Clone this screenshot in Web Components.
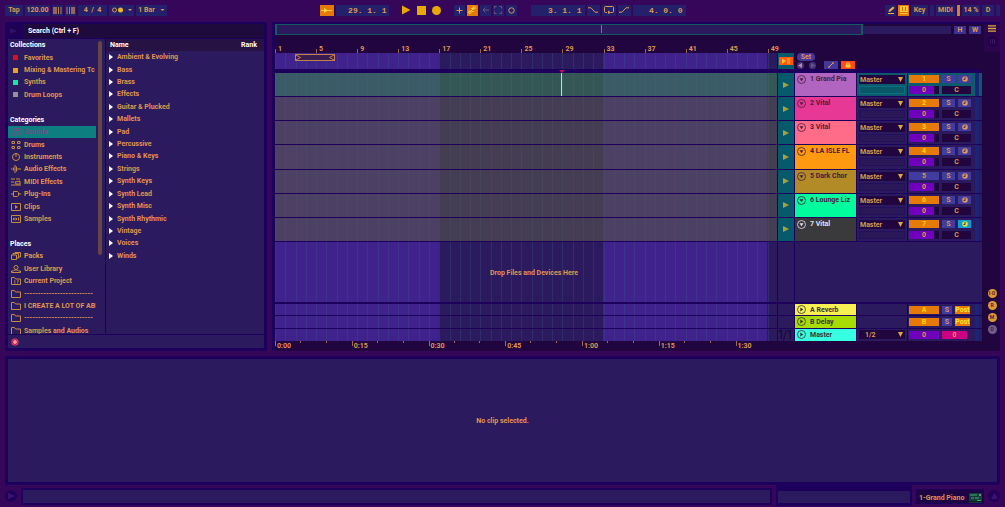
<!DOCTYPE html>
<html lang="en">
<head>
<meta charset="utf-8">
<title>Arrangement</title>
<style>
  :root {
    --page: #35065a; --navy: #1d005c; --panel: #2c1a5e; --deep: #20053f;
    --field: #25206b; --text: #df9650; --gold: #e9a800; --orange: #e67a08;
    --teal: #075a6c; --btn: #413c9f; --violet: #6f00bd;
  }
  html, body { height: 100%; }
  body { margin: 0; background: var(--page); color: var(--text); font: 700 7px/10px Roboto, Inter, sans-serif; }
</style>
</head>
<body>
<daw-app></daw-app>
<script>
const BASE = `<style>
*{box-sizing:border-box}
button,input,select{font:inherit;color:inherit;border:0;margin:0;padding:0;background:none;min-width:0;border-radius:0;outline:0}
button{display:flex;align-items:center;justify-content:center;white-space:nowrap}
select{appearance:none;-webkit-appearance:none}
svg{display:block;fill:none;stroke:currentColor;flex:none}
</style>`;
function define(name, render) {
  customElements.define(name, class extends HTMLElement {
    constructor() { super(); this.attachShadow({ mode: 'open' }); }
    connectedCallback() {
      if (this.shadowRoot.childNodes.length) return;
      this.shadowRoot.innerHTML = BASE + render(this);
    }
  });
}
const svg = (w, h, vw, vh, body) => `<svg width="${w}" height="${h}" viewBox="0 0 ${vw} ${vh}" aria-hidden="true">${body}</svg>`;

/* A box in the control bar; width comes from --w */
define('tool-button', el => `<style>
:host{display:block;flex:none;width:var(--w,11px);height:11px}
button{width:100%;height:100%;background:var(--bg,var(--field));gap:3px}
</style><button type="button" aria-label="${el.getAttribute('label') || el.textContent.trim()}"><slot></slot></button>`);

define('tool-field', el => `<style>
:host{display:block;flex:none;width:var(--w);height:11px}
input{display:block;width:100%;height:11px;background:var(--field);text-align:var(--align,center);padding:0 var(--pr,0px) 0 0}
:host([mono]) input{font-family:"Liberation Mono",monospace;font-weight:700;font-size:8px;white-space:pre}
</style><input aria-label="${el.getAttribute('label')}" value="${el.getAttribute('value')}">`);

define('transport-bar', () => `<style>
:host{display:grid;grid-template-columns:1fr auto 1fr;align-items:center;padding:0 5px;height:20px}
div{display:flex;align-items:center;gap:2px}
.right{justify-content:flex-end}
.sp{margin-left:9px}.sp3{margin-left:12px}
.bare{--bg:transparent;color:var(--gold);--w:13px}
.on{--bg:var(--orange);color:#ffd23c}
.dim{color:#6d5578}
.meter{width:3px;height:11px;background:#c08a2a}
</style>
<div>
 <tool-button style="--w:18px">Tap</tool-button>
 <tool-field label="Tempo" value="120.00" style="--w:25px"></tool-field>
 <tool-button label="Nudge down">${svg(9,7,9,7,'<path d="M1 0v7M3 0v7" stroke-width="1.2"/><path d="M5.5 0v7M8 0v7" stroke-width=".8"/>')}</tool-button>
 <tool-button label="Nudge up">${svg(9,7,9,7,'<path d="M1 0v7M3.5 0v7" stroke-width=".8"/><path d="M6 0v7M8 0v7" stroke-width="1.2"/>')}</tool-button>
 <tool-field label="Time signature" value="4  /  4" style="--w:29px"></tool-field>
 <tool-button label="Metronome" style="--w:25px">${svg(20,6,20,6,'<circle cx="2.5" cy="3" r="2"/><circle cx="8.500" cy="3" r="2.500" fill="#e9b820" stroke="none"/><path d="M16 2h4l-2 2z" fill="currentColor" stroke="none"/>')}</tool-button>
 <tool-button label="Quantization" style="--w:31px">1 Bar&nbsp;${svg(5,3,5,3,'<path d="M.5 0h4l-2 2z" fill="currentColor" stroke="none"/>')}</tool-button>
</div>
<div>
 <tool-button class="on" label="Follow" style="--w:14px">${svg(11,5,11,5,'<path d="M0 2.500h4M6 2.500h5"/><path d="M3 0l4 2.500-4 2.500z" fill="currentColor" stroke="none"/>')}</tool-button>
 <tool-field mono label="Position" value="29. 1. 1" style="--w:53px;--align:right;--pr:2px"></tool-field>
 <tool-button class="bare sp" label="Play">${svg(10,10,10,10,'<path d="M1 .5l8.500 4.500L1 9.500z" fill="currentColor" stroke="none"/>')}</tool-button>
 <tool-button class="bare" label="Stop">${svg(9,9,9,9,'<path d="M0 0h9v9H0z" fill="currentColor" stroke="none"/>')}</tool-button>
 <tool-button class="bare" label="Record">${svg(9,9,9,9,'<circle cx="4.500" cy="4.500" r="4.500" fill="currentColor" stroke="none"/>')}</tool-button>
 <tool-button class="sp" label="Overdub">${svg(7,7,7,7,'<path d="M3.500 .5v6M.5 3.500h6"/>')}</tool-button>
 <tool-button class="on" label="Automation arm">${svg(8,8,8,8,'<path d="M2 6l4-4"/><circle cx="1.800" cy="6.200" r="1.200"/><circle cx="6.200" cy="1.800" r="1.200"/><path d="M3 2.500h2M3.500 5.500h2"/>')}</tool-button>
 <tool-button class="dim" label="Re-enable automation">${svg(7,6,7,6,'<path d="M1 3h6M3.500 .5L1 3l2.500 2.500"/>')}</tool-button>
 <tool-button class="dim" label="Capture">${svg(8,8,8,8,'<path d="M.5 2.500v-2h2M5.500 .5h2v2M7.500 5.500v2h-2M2.500 7.500h-2v-2"/>')}</tool-button>
 <tool-button label="Session record">${svg(7,7,7,7,'<circle cx="3.500" cy="3.500" r="2.700"/>')}</tool-button>
 <tool-field class="sp3" mono label="Loop start" value="3. 1. 1" style="--w:54px;--align:right;--pr:3px"></tool-field>
 <tool-button label="Punch in" style="--w:13px">${svg(10,6,10,6,'<path d="M0 .8h3l4 4.400h3"/>')}</tool-button>
 <tool-button label="Loop" style="--w:14px">${svg(10,8,10,8,'<path d="M3 6.500H1.500q-1 0-1-1v-4q0-1 1-1h7q1 0 1 1v4q0 1-1 1H7"/><path d="M4 4.500l3 2-3 1.500z" fill="currentColor" stroke="none"/>')}</tool-button>
 <tool-button label="Punch out" style="--w:13px">${svg(10,6,10,6,'<path d="M0 5.200h3l4-4.400h3"/>')}</tool-button>
 <tool-field mono label="Loop length" value="4. 0. 0" style="--w:53px;--align:right;--pr:3px"></tool-field>
</div>
<div class="right">
 <tool-button label="Draw mode">${svg(8,8,8,8,'<path d="M1 7.500h6" stroke="#f0b040"/><path d="M1.500 6l.5-2L6 .5l1.500 1.500-4 3.500z" fill="#f0b040" stroke="none"/>')}</tool-button>
 <tool-button class="on" label="Computer keyboard">${svg(8,8,8,8,'<path d="M0 0h8v8H0z" fill="#ffc832" stroke="none"/><path d="M2.500 1v4M5.500 1v4M0 6.500h8" stroke="#d96b00"/>')}</tool-button>
 <tool-button style="--w:17px">Key</tool-button>
 <tool-button label="Key in" style="--w:4px"></tool-button>
 <tool-button style="--w:19px">MIDI</tool-button>
 <span class="meter"></span>
 <tool-button style="--w:18px">14 %</tool-button>
 <tool-button style="--w:12px">D</tool-button>
 <tool-button label="MIDI in" style="--w:4px"></tool-button>
</div>`);

/* Browser */
const F = '<path d="M.5 7.500v-7h3l1 1.500h5v5.500z"/>';
const ICONS = {
  note: '<path d="M3 6.500v-6h6v5.500M3 2.500h6"/><circle cx="2" cy="6.500" r="1.200"/><circle cx="8" cy="6" r="1.200"/>',
  drums: '<path d="M1 .5h2.500v2H1zM6.500 .5H9v2H6.500zM1 5.500h2.500v2H1zM6.500 5.500H9v2H6.500z"/>',
  dial: '<circle cx="5" cy="4" r="3.500"/><path d="M5 0v4"/>',
  wave: '<path d="M0 4h1.500M2.500 2.500v3M4 0v8M5.500 1.500v5M7 3v2M8 4h2"/>',
  midi: '<path d="M0 1h4M0 4h3M0 7h10M5 1h4M4 4l5-1v3H5z"/>',
  plug: '<path d="M0 4h2.500M2.500 1.500h4l1 1v3l-1 1h-4zM7.500 4H10"/>',
  clip: '<path d="M.5 .5h9v7h-9z"/><path d="M4 2l3 2-3 2z" fill="currentColor" stroke="none"/>',
  sample: '<path d="M.5 .5h9v7h-9z"/><path d="M2.500 3v2M4 2.500v3M5.500 3v2M7.500 2.500v3"/>',
  packs: '<path d="M.5 3h5v4.500h-5zM2 3V1.500h5.500V6H5.500M4 1.500V.5h5.500V5H7.500"/>',
  user: '<circle cx="5" cy="2.500" r="2"/><path d="M.5 7.500V6h2l1-1h3l1 1h2v1.500z"/>',
  project: F + '<path d="M3 4h1.500M6 4h2M3 6h1.500M6 6h1"/>',
  folder: F
};
define('browser-item', el => {
  const i = el.getAttribute('icon') || '', sel = el.hasAttribute('selected');
  const g = i[0] === '#' ? `<i style="background:${i}"></i>` : svg(10, 8, 10, 8, ICONS[i]);
  return `<style>
:host{display:flex;min-width:0;min-height:0}
button{display:flex;width:100%;justify-content:flex-start;padding-left:3px;overflow:hidden;${sel ? 'background:#0d7f80;color:#8c3f80' : ''}}
span.g{flex:none;width:13px;color:${sel ? '#7a4a80' : '#c48c42'}}
i{display:block;width:5px;height:5px;margin-left:2px}
</style><button type="button"><span class="g">${g}</span><slot></slot></button>`;
});
define('folder-row', () => `<style>
:host{display:flex}
button{gap:4px}
</style><button type="button">${svg(4,6,4,6,'<path d="M0 0l4 3-4 3z" fill="#fff" stroke="none"/>')}<slot></slot></button>`);

const it = (icon, t, x = '') => `<browser-item icon="${icon}" ${x}>${t}</browser-item>`;
define('browser-panel', () => `<style>
:host{display:grid;grid-template-rows:14px 1fr 13px;gap:1px;background:var(--navy);padding:2px 3px 3px;min-width:0;border-radius:2px}
.search{display:flex;gap:4px}
.search input{flex:1;background:#1f0a3e;color:#fff;padding-left:5px}
.search input::placeholder{color:#fff;opacity:1}
.search .c{width:11px;height:11px;margin-top:1px;border-radius:50%;background:#21004f;color:#32106a}
.body{display:grid;grid-template-columns:97px 1fr;gap:1px;min-height:0;overflow:hidden}
.side{background:var(--panel);height:295px;overflow:hidden;display:grid;grid-template-columns:88px 4px;column-gap:2px}
.list{height:298px;display:grid;grid-auto-rows:1fr}
h2{margin:0;font:inherit;line-height:12px;color:#fff;padding-left:2px;align-self:center}
.bar{width:4px;height:214px;margin-top:2px;background:#674445;border-radius:2px}
.names{background:var(--panel)}
.hd{display:flex;justify-content:space-between;background:#261344;height:12px;padding:0 7px 0 2px}
.rows{height:211px;display:grid;grid-auto-rows:1fr;padding-left:3px}
.foot{background:var(--panel);display:flex;align-items:center;padding-left:3px}
</style>
<div class="search"><button class="c" type="button" aria-label="Hide browser">${svg(7,6,7,6,'<path d="M0 0l7 3-7 3z" fill="currentColor" stroke="none"/>')}</button><input type="search" aria-label="Search" placeholder="Search (Ctrl + F)"></div>
<div class="body">
<nav class="side"><div class="list"><h2>Collections</h2>
${it('#d8101c','Favorites')}${it('#f0a020','Mixing &amp; Mastering Tc')}${it('#10e8a8','Synths')}${it('#9490a0','Drum Loops')}<span></span>
<h2>Categories</h2>${it('note','Sounds','selected')}${it('drums','Drums')}${it('dial','Instruments')}${it('wave','Audio Effects')}${it('midi','MIDI Effects')}${it('plug','Plug-Ins')}${it('clip','Clips')}${it('sample','Samples')}<span></span>
<h2>Places</h2>${it('packs','Packs')}${it('user','User Library')}${it('project','Current Project')}${it('folder','-------------------------')}${it('folder','I CREATE A LOT OF ABI')}${it('folder','-------------------------')}${it('folder','Samples and Audios')}
</div><span class="bar"></span></nav>
<section class="names"><div class="hd"><h2>Name</h2><h2>Rank</h2></div><div class="rows">
${['Ambient &amp; Evolving','Bass','Brass','Effects','Guitar &amp; Plucked','Mallets','Pad','Percussive','Piano &amp; Keys','Strings','Synth Keys','Synth Lead','Synth Misc','Synth Rhythmic','Vintage','Voices','Winds'].map(n => `<folder-row>${n}</folder-row>`).join('')}
</div></section></div>
<div class="foot">${svg(8,8,8,8,'<circle cx="4" cy="4" r="3.500" fill="#f2507c" stroke="none"/><circle cx="4" cy="4" r="2.500" stroke="#c8104a"/><path d="M4 2v4M2 4h4" stroke="#ffc0b0"/>')}</div>`);

/* One row of the arrangement: lane, launch cell, name, routing, mixer */
const ROWCSS = `
:host{display:grid;grid-template-columns:1fr 16px 61px 50px 74px;column-gap:1px;min-height:0;min-width:0}
.lane{background:linear-gradient(var(--tint),var(--tint)),repeating-linear-gradient(90deg,rgba(60,90,140,.28) 0 1px,transparent 1px 2.045%),linear-gradient(90deg,#3f228c 0 32.700%,#2c1a5e 0 65.300%,#3f228c 0 98%,#2c1a5e 0)}
.name{display:flex;gap:4px;padding:0 0 0 2px;overflow:hidden;white-space:nowrap}
.io,.mix{background:var(--cell,var(--panel))}
button.b{font-size:7px;line-height:8px;background:var(--fill,var(--btn));height:8px}
`;
define('track-row', el => {
  const g = n => el.getAttribute(n), sel = el.hasAttribute('selected'), n = g('n');
  return `<style>${ROWCSS}
:host{--tint:${sel ? 'rgba(56,128,80,.6)' : 'rgba(85,85,75,.6)'};--cell:${sel ? '#0c5a6c' : 'var(--panel)'};border-bottom:1px solid var(--navy)}
.lane{position:relative}
.head{position:absolute;left:57%;top:-3px;bottom:0;margin-left:-2px;width:5px}
.head:before{content:"";display:block;border:3px solid transparent;border-top-color:#c8104a;border-bottom:0}
.head:after{content:"";display:block;width:1px;height:23px;margin-left:2px;background:#d8d0d8}
.launch{background:var(--teal);color:#a8a038}
.name{background:${g('color')};color:${g('ink') || '#45203c'};padding-top:1px}
.name svg{margin-top:1px}
.io{padding:2px 2px 1px;display:grid;grid-template-rows:9px 8px;row-gap:2px}
.io label{display:flex;align-items:center;background:var(--deep);padding-right:2px}
.io select{flex:1;height:9px;padding-left:1px}
.slot{background:${sel ? '#085868' : '#281857'};border:1px solid ${sel ? '#0c7080' : '#24105a'}}
.mix{display:grid;grid-template-columns:30px 13px 13px 1fr;column-gap:3px;padding-left:1px}
.c{display:grid;grid-template-rows:8px 8px;row-gap:3px;padding-top:2px}
.two{grid-column:2/4;display:grid;grid-template-columns:13px 13px;grid-template-rows:8px 8px;gap:3px;padding-top:2px}
.two .pan{grid-column:1/3;--fill:var(--deep)}
.num{${n === '5' ? '' : '--fill:var(--orange);color:#ffd400'}}
.vol{--fill:linear-gradient(90deg,var(--violet) 25px,var(--deep) 0)}
.rec{${n === '7' ? '--fill:#109cd0;color:#e8e030' : ''}}
.mt{display:block;width:4px;margin-left:1px;background:#1c2478}
</style>
<div class="lane">${sel ? '<span class="head"></span>' : ''}</div>
<button class="launch" type="button" aria-label="Track ${n} activity">${svg(6,6,6,6,'<path d="M0 0l6 3-6 3z" fill="currentColor" stroke="none"/>')}</button>
<div class="name">${svg(9,9,9,9,'<circle cx="4.500" cy="4.500" r="4" stroke-width=".8"/><path d="M2.500 3.200h4l-2 3z" fill="currentColor" stroke="none"/>')}<span><slot></slot></span></div>
<div class="io"><label><select aria-label="Output of track ${n}"><option>Master</option></select>${svg(5,5,5,5,'<path d="M0 0h5l-2.500 5z" fill="#e0a840" stroke="none"/>')}</label><div class="slot"></div></div>
<div class="mix"><div class="c"><button class="b num" type="button">${n}</button><button class="b vol" type="button">0</button></div>
<div class="two"><button class="b" type="button">S</button><button class="b rec" type="button" aria-label="Arm">${svg(6,6,6,6,'<circle cx="3" cy="3" r="2.800" fill="currentColor" stroke="none"/><path d="M3 1v2.500H1.500" stroke="#33308a"/>')}</button><button class="b pan" type="button">C</button></div><i class="mt"></i></div>`;
});

define('return-row', el => {
  const n = el.getAttribute('n'), m = n === 'M';
  return `<style>${ROWCSS}
:host{--tint:transparent;border-bottom:1px solid var(--navy)}
:host([n="M"]){border-bottom:0}
.name{grid-column:3;align-items:center;background:${el.getAttribute('color')};color:#3a3434}
.cellx{background:var(--panel);position:relative}
.q{position:absolute;right:2px;top:0;font:400 12px/12px Inter,sans-serif;color:#150830;white-space:nowrap}
.io{padding:1px 2px}
.io label{display:flex;align-items:center;background:var(--deep);height:9px;padding-right:2px}
.io select{flex:1;padding-left:6px;height:9px}
.mix{display:grid;grid-template-columns:30px 10px 15px 1fr;column-gap:3px;padding-left:1px;align-items:center}
.num{${m ? '--fill:var(--violet)' : '--fill:var(--orange);color:#ffd400'}}
.post{--fill:var(--orange);color:#ffe030}
.pk{grid-column:2/4;width:25px;--fill:#cc0080}
.mt{display:block;width:4px;height:100%;margin-left:2px;background:#1c2478}
</style>
<div class="lane"></div><div class="cellx">${m ? '<span class="q">1/1</span>' : ''}</div>
<div class="name">${svg(9,9,9,9,'<circle cx="4.500" cy="4.500" r="4" stroke-width=".8"/><path d="M3.300 2.500l3 2-3 2z" fill="currentColor" stroke="none"/>')}<span><slot></slot></span></div>
<div class="io">${m ? `<label><select aria-label="Master output"><option>1/2</option></select>${svg(5,5,5,5,'<path d="M0 0h5l-2.500 5z" fill="#e0a840" stroke="none"/>')}</label>` : ''}</div>
<div class="mix"><button class="b num" type="button">${m ? '0' : n}</button>${m ? '<button class="b pk" type="button">0</button>' : '<button class="b" type="button">S</button><button class="b post" type="button">Post</button>'}<i class="mt"></i></div>`;
});

define('bar-ruler', () => `<style>
:host{display:flex;height:10px;margin-top:8px}
span{flex:40 0 0;min-width:0;white-space:nowrap;display:flex;gap:2px;line-height:12px}
span:last-child{flex:9 0 0}
span:before{content:"";width:1px;height:4px;margin-top:6px;background:#9a6448;flex:none}
</style>${[...Array(13)].map((_, i) => `<span>${i * 4 + 1}</span>`).join('')}`);
define('time-ruler', () => `<style>
:host{display:flex;height:10px}
span{flex:769 0 0;min-width:0;white-space:nowrap;line-height:10px;
background:linear-gradient(#a06a50,#a06a50) 0 0/1px 5px no-repeat,linear-gradient(#a06a50,#a06a50) 33% 0/1px 2px no-repeat,linear-gradient(#a06a50,#a06a50) 67% 0/1px 2px no-repeat}
span:before{content:"";display:inline-block;width:2px}
span:last-child{flex:415 0 0;background:linear-gradient(#a06a50,#a06a50) 0 0/1px 5px no-repeat}
span:nth-child(5){position:relative}
b{position:absolute;right:100%;margin-right:18px;top:-2px;border:3px solid transparent;border-bottom-color:#c8104a;border-top:0}
</style>${['0:00', '0:15', '0:30', '0:45', '1:00', '1:15', '1:30'].map(t => `<span>${t}${t === '1:00' ? '<b></b>' : ''}</span>`).join('')}`);

define('arrangement-view', () => `<style>${ROWCSS.replace(/:host\{[^}]*\}/, '')}
:host{display:grid;grid-template-columns:1fr 16px;column-gap:2px;background:var(--deep);border:solid var(--navy);border-width:2px 0 0 3px;min-width:0}
.main{display:grid;grid-template-rows:11px 18px 16px 4px 169px 62px 37px 10px;min-width:0}
.g{display:grid;grid-template-columns:1fr 16px 61px 50px 74px;column-gap:1px}
.over{display:flex;align-items:center;gap:3px;padding-right:1px}
.over .v{flex:588;height:11px;border:1px solid #135a60;border-width:1px 2px;background:var(--panel);display:flex;justify-content:center}
.v i{width:1px;height:8px;background:#b06a40;margin-left:65px}
.over .r{flex:89;height:8px;background:var(--panel);margin-left:-3px}
.over button{width:12px;height:8px;background:#3d318f}
.scrub{position:relative}
.loop{position:absolute;left:4%;width:8%;min-width:30px;top:1px;height:7px;border:1px solid #c08048;background:#3a1c50;display:flex;justify-content:space-between;color:#c08048}
.lane{--tint:transparent}
.s2{background:var(--teal);padding:4px 1px}
.s2 button{width:100%;height:8px;background:#ff5a10;color:#ffc030}
.set{display:grid;grid-column:3/6;grid-template-columns:9px 12px 14px 14px;column-gap:3px;grid-template-rows:8px 8px;padding-left:2px}
.set .p{grid-column:1/3;width:18px;background:#43389a;border-radius:4px;height:8px}
.set .rd{width:7px;height:7px;border-radius:50%;background:#46327c;grid-row:2;margin-top:1px}
.set .k{grid-row:2;background:#43389a;height:8px;width:14px}
.set .k.red{background:#ff4a1c;color:#ffd030}
.gap{background:var(--navy)}
.tracks{display:grid;grid-auto-rows:1fr;background:var(--navy)}
.drop{background:var(--navy);padding-bottom:2px}
.drop .lane{display:flex;align-items:center;justify-content:center;padding:2px 0 0 16px}
.drop .b2{grid-column:3/6;background:var(--panel)}
.drop .b1{background:var(--panel)}
.ret{display:grid;grid-auto-rows:1fr;background:var(--navy)}
.rail{display:flex;flex-direction:column;align-items:center}
.top{align-self:stretch;background:#2b054c;height:28px;display:flex;flex-direction:column;align-items:center;gap:4px}
.top button{width:11px;height:9px}
.dot{width:9px;height:9px;border-radius:50%;background:#dd9830;color:#4a2040;font-size:5px;line-height:9px;margin-bottom:3px}
.rail .gapx{flex:1}
.dot.low{margin-bottom:17px;background:#6d5c92}
</style>
<div class="main">
<div class="over"><div class="v"><i></i></div><div class="r"></div><button type="button">H</button><button type="button">W</button></div>
<div class="g"><bar-ruler></bar-ruler></div>
<div class="g"><div class="lane scrub"><div class="loop">${svg(5,5,5,5,'<path d="M0 0l4.500 2.500L0 5"/>')}${svg(5,5,5,5,'<path d="M5 0L.5 2.500 5 5"/>')}</div></div>
<div class="s2"><button type="button" aria-label="Back to arrangement">${svg(10,6,10,6,'<path d="M1 .5l4 2.500-4 2.500z" fill="currentColor" stroke="none"/><path d="M6 1h3M6 3h3M6 5h3"/>')}</button></div>
<div class="set"><button class="p" type="button">Set</button>
<button class="rd" type="button" aria-label="Previous locator">${svg(5,5,5,5,'<path d="M4 0L0 2.500 4 5z" fill="#b090a0" stroke="none"/>')}</button>
<button class="rd" type="button" aria-label="Next locator">${svg(5,5,5,5,'<path d="M1 0l4 2.500L1 5z" fill="#6a5088" stroke="none"/>')}</button>
<button class="k" type="button" aria-label="Automation mode">${svg(6,6,6,6,'<path d="M1 5l4-4"/><circle cx="1" cy="5" r=".5"/><circle cx="5" cy="1" r=".5"/>')}</button>
<button class="k red" type="button" aria-label="Lock envelopes">${svg(6,6,6,6,'<path d="M.5 2.500h5v3h-5z" fill="currentColor" stroke="none"/><path d="M1.500 3V1.500q1.500-1.500 3 0V3"/>')}</button></div></div>
<div class="gap"></div>
<div class="tracks">
<track-row n="1" selected color="#b265c0">1 Grand Pia</track-row>
<track-row n="2" color="#e83896">2 Vital</track-row>
<track-row n="3" color="#ff6c88">3 Vital</track-row>
<track-row n="4" color="#ff990f">4 LA ISLE FL</track-row>
<track-row n="5" color="#b28b26">5 Dark Chor</track-row>
<track-row n="6" color="#00fc9c">6 Lounge Liz</track-row>
<track-row n="7" color="#3a3a3c" ink="#e8e0e8">7 Vital</track-row>
</div>
<div class="g drop"><div class="lane">Drop Files and Devices Here</div><div class="b1"></div><div class="b2"></div></div>
<div class="ret"><return-row n="A" color="#f6f052">A Reverb</return-row><return-row n="B" color="#a6dc00">B Delay</return-row><return-row n="M" color="#36ffe2">Master</return-row></div>
<div class="g"><time-ruler></time-ruler></div>
</div>
<div class="rail"><div class="top"><button type="button" aria-label="Menu">${svg(8,7,8,7,'<path d="M0 .8h8M0 3.500h8M0 6.200h8" stroke="#e0a840" stroke-width="1.300"/>')}</button><button type="button" aria-label="Session view">${svg(11,11,11,11,'<circle cx="5.500" cy="5.500" r="5" fill="#24003f" stroke="#21004f"/><path d="M3.500 3v5M5.500 3v5M7.500 3v5" stroke="#3a1464"/>')}</button></div>
<span class="gapx"></span>
<button class="dot" type="button">I·O</button><button class="dot" type="button">R</button><button class="dot" type="button">M</button><button class="dot low" type="button">D</button></div>`);

define('detail-view', () => `<style>
:host{display:flex;align-items:center;justify-content:center;background:var(--panel);border:3px solid var(--navy);border-radius:2px;min-height:60px}
</style><slot></slot>`);

define('status-strip', () => `<style>
:host{display:grid;grid-template-columns:12px 1fr 136px 68px 12px;column-gap:4px;height:22px;padding:0 5px}
.c{width:12px;height:12px;margin-top:5px;border-radius:50%;background:#22005a;color:#3a1470}
.box{background:var(--panel);border:2px solid var(--navy);margin:3px 0 2px}
.tab{background:var(--panel);border:solid var(--navy);border-width:6px 2px 3px;margin-bottom:1px}
.dev{display:flex;align-items:center;justify-content:space-between;background:#1d0544;border:1px solid var(--navy);margin:4px 0 3px;padding:2px 1px 0 2px}
</style>
<button class="c" type="button" aria-label="Toggle info view">${svg(7,6,7,6,'<path d="M0 0l7 3-7 3z" fill="currentColor" stroke="none"/>')}</button>
<div class="box"></div><div class="tab"></div>
<button class="dev" type="button">1-Grand Piano ${svg(13,10,13,10,'<path d="M0 0h13v10H0z" fill="#143c3c" stroke="none"/><path d="M1 2h7M2 5h3M6 5h4M8 7.500h4" stroke="#38b070"/><path d="M10 2h2" stroke="#c8e0c0"/><path d="M0 8.500h13" stroke="#0a201c"/>')}</button>
<button class="c" type="button" aria-label="Toggle detail view">${svg(7,6,7,6,'<path d="M0 6l3.500-6L7 6z" fill="currentColor" stroke="none"/>')}</button>`);

define('daw-app', () => `<style>
:host{display:grid;grid-template-rows:20px auto 1fr 22px;min-height:100%}
.mid{display:grid;grid-template-columns:262px 1fr;column-gap:5px;padding:2px 5px 0}
detail-view{margin:5px 5px 0}
</style><transport-bar></transport-bar><div class="mid"><browser-panel></browser-panel><arrangement-view></arrangement-view></div><detail-view>No clip selected.</detail-view><status-strip></status-strip>`);
</script>
</body>
</html>
